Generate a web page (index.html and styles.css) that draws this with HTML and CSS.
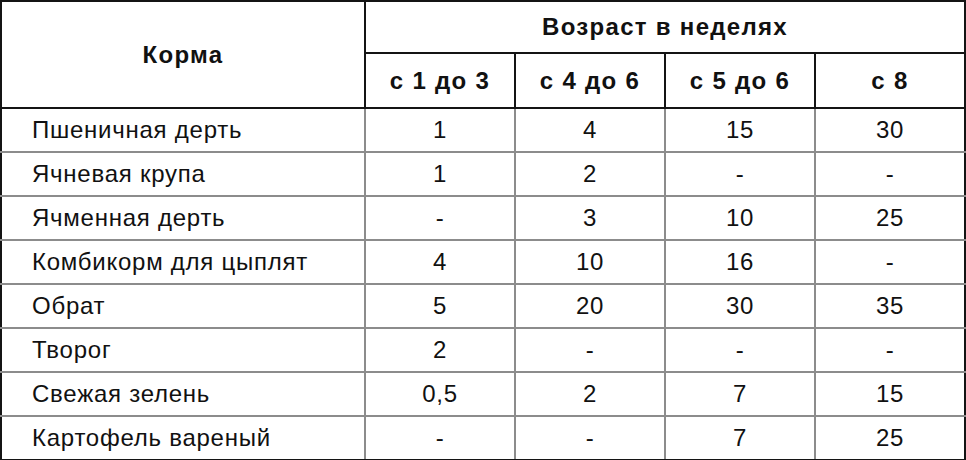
FILE: index.html
```html
<!DOCTYPE html>
<html lang="ru">
<head>
<meta charset="utf-8">
<title>Корма</title>
<link rel="stylesheet" href="styles.css">
</head>
<body>
<table class="feed">
  <colgroup>
    <col class="c-name">
    <col class="c-val">
    <col class="c-val">
    <col class="c-val">
    <col class="c-val">
  </colgroup>
  <thead>
    <tr class="h1">
      <th rowspan="2" class="name-h">Корма</th>
      <th colspan="4" class="group-h">Возраст в неделях</th>
    </tr>
    <tr class="h2">
      <th>с 1 до 3</th>
      <th>с 4 до 6</th>
      <th>с 5 до 6</th>
      <th>с 8</th>
    </tr>
  </thead>
  <tbody>
    <tr><td class="name">Пшеничная дерть</td><td>1</td><td>4</td><td>15</td><td>30</td></tr>
    <tr><td class="name">Ячневая крупа</td><td>1</td><td>2</td><td>-</td><td>-</td></tr>
    <tr><td class="name">Ячменная дерть</td><td>-</td><td>3</td><td>10</td><td>25</td></tr>
    <tr><td class="name">Комбикорм для цыплят</td><td>4</td><td>10</td><td>16</td><td>-</td></tr>
    <tr><td class="name">Обрат</td><td>5</td><td>20</td><td>30</td><td>35</td></tr>
    <tr><td class="name">Творог</td><td>2</td><td>-</td><td>-</td><td>-</td></tr>
    <tr><td class="name">Свежая зелень</td><td>0,5</td><td>2</td><td>7</td><td>15</td></tr>
    <tr><td class="name">Картофель вареный</td><td>-</td><td>-</td><td>7</td><td>25</td></tr>
  </tbody>
</table>
</body>
</html>
```

FILE: styles.css
```css
html, body {
  margin: 0;
  padding: 0;
  background: #ffffff;
}

body {
  font-family: "Liberation Sans", Arial, sans-serif;
  color: #111111;
}

.feed {
  border-collapse: collapse;
  table-layout: fixed;
  width: 965px;
  border: 2px solid #141414;
}

.c-name { width: 364px; }
.c-val { width: 150px; }

.feed th {
  font-weight: bold;
  font-size: 24px;
  letter-spacing: 1.3px;
  text-align: center;
  vertical-align: middle;
  border: 2px solid #141414;
  padding: 0;
}

.h1 th { height: 50px; }
.h2 th { height: 53px; }

.feed td {
  font-size: 24px;
  letter-spacing: 0.75px;
  text-align: center;
  vertical-align: middle;
  border: 2px solid #8c8c8c;
  height: 42px;
  padding: 0;
}

.feed td.name {
  text-align: left;
  padding-left: 30px;
}

.feed tbody tr:first-child td { border-top-color: #141414; }
.feed tbody td:first-child { border-left-color: #141414; }
.feed tbody td:last-child { border-right-color: #141414; }
.feed tbody tr:last-child td { border-bottom-color: #141414; }
```
